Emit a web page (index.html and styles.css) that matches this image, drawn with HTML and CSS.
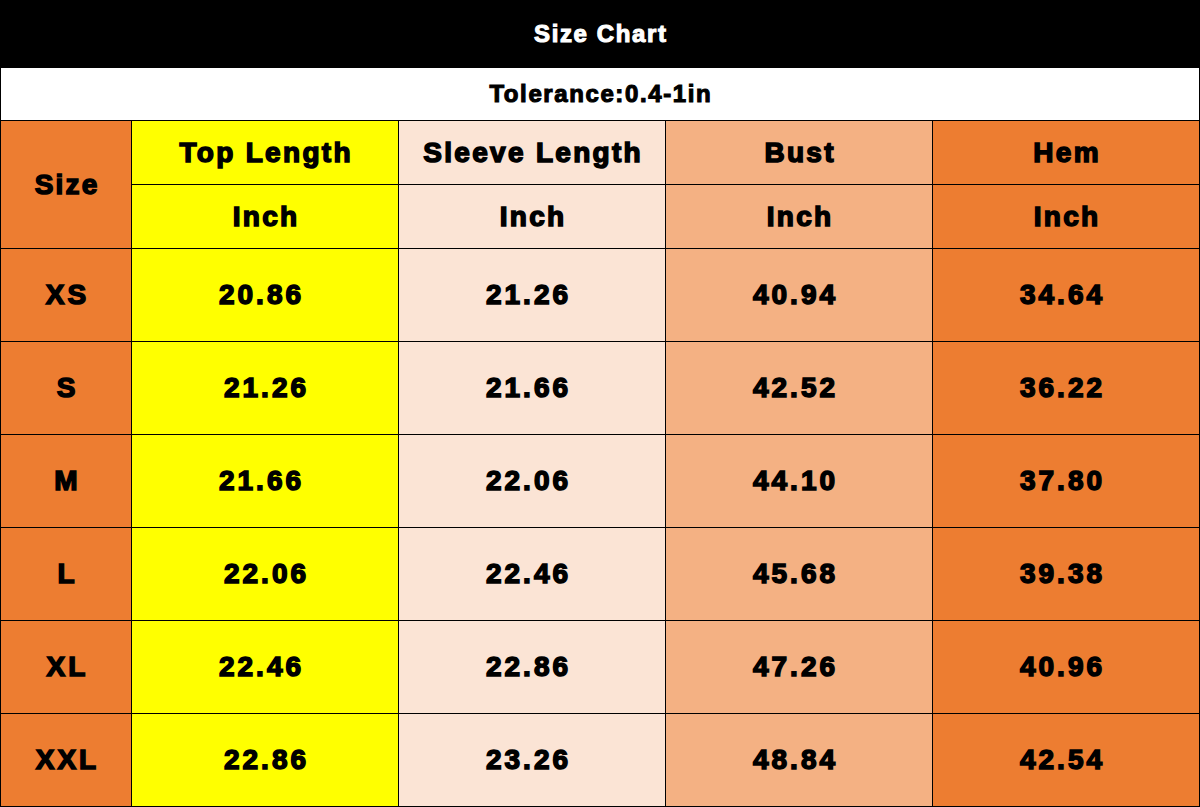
FILE: index.html
```html
<!DOCTYPE html>
<html>
<head>
<meta charset="utf-8">
<link rel="stylesheet" href="styles.css">
</head>
<body>
<div class="chart">
  <div class="title">Size Chart</div>
  <div class="tol">Tolerance:0.4-1in</div>

  <div class="c size hsize">Size</div>
  <div class="c top hd">Top Length</div>
  <div class="c sleeve hd">Sleeve Length</div>
  <div class="c bust hd">Bust</div>
  <div class="c hem hd">Hem</div>
  <div class="c top hd">Inch</div>
  <div class="c sleeve hd">Inch</div>
  <div class="c bust hd">Inch</div>
  <div class="c hem hd">Inch</div>

  <div class="c size num">XS</div>
  <div class="c top num val">20.86</div>
  <div class="c sleeve num val">21.26</div>
  <div class="c bust num val">40.94</div>
  <div class="c hem num val">34.64</div>

  <div class="c size num">S</div>
  <div class="c top num">21.26</div>
  <div class="c sleeve num val">21.66</div>
  <div class="c bust num val">42.52</div>
  <div class="c hem num val">36.22</div>

  <div class="c size num">M</div>
  <div class="c top num val">21.66</div>
  <div class="c sleeve num val">22.06</div>
  <div class="c bust num val">44.10</div>
  <div class="c hem num val">37.80</div>

  <div class="c size num">L</div>
  <div class="c top num">22.06</div>
  <div class="c sleeve num val">22.46</div>
  <div class="c bust num val">45.68</div>
  <div class="c hem num val">39.38</div>

  <div class="c size num">XL</div>
  <div class="c top num val">22.46</div>
  <div class="c sleeve num val">22.86</div>
  <div class="c bust num val">47.26</div>
  <div class="c hem num val">40.96</div>

  <div class="c size num">XXL</div>
  <div class="c top num">22.86</div>
  <div class="c sleeve num val">23.26</div>
  <div class="c bust num val">48.84</div>
  <div class="c hem num val">42.54</div>
</div>
</body>
</html>
```

FILE: styles.css
```css
* { box-sizing: border-box; }
html, body { margin: 0; padding: 0; background: #fff; }

.chart {
  width: 1200px;
  height: 807px;
  display: grid;
  grid-template-columns: 130px 266px 266px 266px 266px;
  grid-template-rows: 67px 52px 63px 63px repeat(6, 92px);
  gap: 1px;
  padding: 0 1px 1px 1px;
  background: #000;
  font-family: "Liberation Sans", Arial, sans-serif;
  font-weight: bold;
  color: #000;
}

.title {
  grid-column: 1 / -1;
  margin: 0 -1px;
  background: #000;
  color: #fff;
  font-size: 24px;
  letter-spacing: 1.6px;
  padding-left: 1.6px;
  -webkit-text-stroke: 1.1px #fff;
  display: flex;
  align-items: center;
  justify-content: center;
}

.tol {
  grid-column: 1 / -1;
  background: #fff;
  font-size: 24px;
  letter-spacing: 1.6px;
  padding-left: 1.6px;
  -webkit-text-stroke: 1.1px #000;
  display: flex;
  align-items: center;
  justify-content: center;
}

.c {
  display: flex;
  align-items: center;
  justify-content: center;
  font-size: 28px;
  -webkit-text-stroke: 1.5px #000;
}

.hd { letter-spacing: 2.3px; padding-left: 2.3px; }
.num { letter-spacing: 3px; padding-left: 3px; }
.val { padding-left: 0; padding-right: 7px; }
.hsize { grid-row: span 2; letter-spacing: 2.2px; padding-left: 2.2px; }

.size { background: #ed7d31; }
.top { background: #ffff00; }
.sleeve { background: #fbe4d5; }
.bust { background: #f4b183; }
.hem { background: #ed7d31; }
```
